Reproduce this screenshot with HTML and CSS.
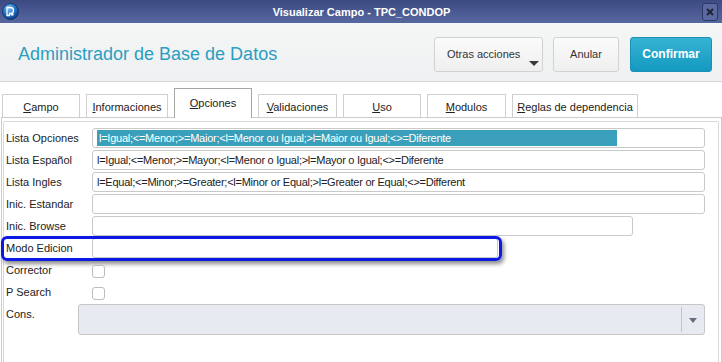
FILE: index.html
```html
<!DOCTYPE html>
<html lang="es">
<head>
    <meta charset="UTF-8">
    <title>Visualizar Campo - TPC_CONDOP</title>
    <link rel="stylesheet" href="styles.css">
</head>
<body>
    <div class="window">
        <div class="titlebar">
            <svg class="app-icon" width="17" height="17" viewBox="0 0 17 17">
                <defs>
                    <radialGradient id="glow" cx="40%" cy="30%" r="70%">
                        <stop offset="0" stop-color="#7fc0f0"/>
                        <stop offset="0.6" stop-color="#1e6cc0"/>
                        <stop offset="1" stop-color="#0c3f86"/>
                    </radialGradient>
                </defs>
                <circle cx="8.5" cy="8.5" r="8" fill="url(#glow)" stroke="#0a2f66" stroke-width="0.8"/>
                <path d="M5 4.5 h3.5 a3 3 0 0 1 0 6 h-1 v2 h-2.5z" fill="none" stroke="#ffffff" stroke-width="1.3"/>
                <rect x="9" y="10.5" width="2.5" height="2" fill="#ffffff"/>
            </svg>
            <span class="title">Visualizar Campo - TPC_CONDOP</span>
            <span class="close">
                <svg width="8" height="8" viewBox="0 0 8 8">
                    <path d="M1 1 L7 7 M7 1 L1 7" stroke="#1e2336" stroke-width="2"/>
                </svg>
            </span>
        </div>

        <div class="header">
            <h1>Administrador de Base de Datos</h1>
            <div class="actions">
                <button class="btn btn-menu">Otras acciones<span class="caret"></span></button>
                <button class="btn btn-cancel">Anular</button>
                <button class="btn btn-primary">Confirmar</button>
            </div>
        </div>

        <div class="tabs">
            <div class="tab w78"><u>C</u>ampo</div>
            <div class="tab w82"><u>I</u>nformaciones</div>
            <div class="tab tab-active w78"><u>O</u>pciones</div>
            <div class="tab w79"><u>V</u>alidaciones</div>
            <div class="tab w78"><u>U</u>so</div>
            <div class="tab w79"><u>M</u>odulos</div>
            <div class="tab w126"><u>R</u>eglas de dependencia</div>
        </div>

        <div class="panel">
            <div class="frame">
                <div class="row">
                    <label>Lista Opciones</label>
                    <div class="field"><span class="selected">l=Igual;&lt;=Menor;&gt;=Maior;&lt;l=Menor ou Igual;&gt;l=Maior ou Igual;&lt;&gt;=Diferente</span></div>
                </div>
                <div class="row">
                    <label>Lista Español</label>
                    <div class="field">l=Igual;&lt;=Menor;&gt;=Mayor;&lt;l=Menor o Igual;&gt;l=Mayor o Igual;&lt;&gt;=Diferente</div>
                </div>
                <div class="row">
                    <label>Lista Ingles</label>
                    <div class="field">l=Equal;&lt;=Minor;&gt;=Greater;&lt;l=Minor or Equal;&gt;l=Greater or Equal;&lt;&gt;=Different</div>
                </div>
                <div class="row">
                    <label>Inic. Estandar</label>
                    <div class="field"></div>
                </div>
                <div class="row">
                    <label>Inic. Browse</label>
                    <div class="field field-browse"></div>
                </div>
                <div class="row">
                    <label>Modo Edicion</label>
                    <div class="field field-mode"></div>
                    <div class="callout"></div>
                </div>
                <div class="row">
                    <label>Corrector</label>
                    <span class="check"></span>
                </div>
                <div class="row">
                    <label>P Search</label>
                    <span class="check"></span>
                </div>
                <div class="row">
                    <label class="label-short">Cons.</label>
                    <div class="combo">
                        <span class="combo-arrow"></span>
                    </div>
                </div>
            </div>
        </div>
    </div>
</body>
</html>
```

FILE: styles.css
```css
body {
    margin: 0;
    font-family: "Liberation Sans", Arial, sans-serif;
    font-size: 11px;
    color: #222;
    background: #ffffff;
}
.window {
    width: 722px;
    height: 362px;
    overflow: hidden;
}
.titlebar {
    height: 23px;
    display: flex;
    align-items: center;
    padding: 0 4px 0 2px;
    background: linear-gradient(#3c4a82, #5767a0);
    box-sizing: border-box;
}
.app-icon {
    flex: none;
}
.title {
    flex: 1;
    text-align: center;
    color: #ffffff;
    font-weight: bold;
    font-size: 11px;
    padding-left: 2px;
}
.close {
    width: 14px;
    height: 16px;
    border: 1px solid #2d3a68;
    border-radius: 3px;
    background: #5a6aa0;
    display: flex;
    align-items: center;
    justify-content: center;
}
.header {
    height: 59px;
    border-bottom: 1px solid #d6d6d6;
    background: linear-gradient(#f5f6f6, #eef0f1);
    display: flex;
    align-items: center;
    justify-content: space-between;
    padding: 4px 10px 0 18px;
    box-sizing: border-box;
}
h1 {
    margin: 0;
    font-weight: normal;
    font-size: 18px;
    color: #2b9ec1;
}
.actions {
    display: flex;
    gap: 10px;
}
.btn {
    height: 35px;
    font-family: "Liberation Sans", Arial, sans-serif;
    font-size: 11px;
    color: #333;
    border: 1px solid #d2d2d2;
    border-radius: 3px;
    background: linear-gradient(#fbfbfb, #efefef);
    padding: 0;
    position: relative;
}
.btn-menu {
    width: 109px;
    text-align: left;
    padding-left: 12px;
}
.caret {
    position: absolute;
    right: 3px;
    bottom: 5px;
    border-left: 5px solid transparent;
    border-right: 5px solid transparent;
    border-top: 5px solid #3a3a3a;
}
.btn-cancel {
    width: 66px;
}
.btn-primary {
    width: 82px;
    margin-left: 1px;
    font-size: 12px;
    font-weight: bold;
    color: #ffffff;
    border-color: #1a90b6;
    background: linear-gradient(#36b3d3, #1499c1);
}
.tabs {
    display: flex;
    align-items: flex-end;
    gap: 6px;
    height: 29px;
    margin-top: 6px;
    padding-left: 2px;
}
.tab {
    height: 23px;
    box-sizing: border-box;
    border: 1px solid #cfcfcf;
    border-bottom: none;
    background: #ffffff;
    text-align: center;
    line-height: 24px;
}
.tab-active {
    height: 30px;
    margin-bottom: -1px;
    border-color: #a6a6a6;
    line-height: 28px;
    position: relative;
}
.w78 { width: 78px; }
.w79 { width: 79px; }
.w82 { width: 82px; }
.w126 { width: 126px; }
.panel {
    border: 1px solid #cccccc;
    border-bottom: none;
    margin-left: 1px;
    padding: 3px 2px 0 1px;
    height: 250px;
}
.frame {
    border: 1px solid #d9d9d9;
    border-bottom: none;
    border-radius: 2px 2px 0 0;
    height: 100%;
    padding: 6px 13px 0 2px;
}
.row {
    display: flex;
    height: 20px;
    margin-bottom: 2px;
    position: relative;
}
.row label {
    width: 86px;
    flex: none;
    line-height: 20px;
}
.row .label-short {
    width: 72px;
}
.field {
    flex: 1;
    height: 20px;
    box-sizing: border-box;
    border: 1px solid #c9c9c9;
    border-radius: 3px;
    padding: 0 4px;
    line-height: 18px;
    letter-spacing: -0.25px;
    white-space: nowrap;
    overflow: hidden;
    background: #ffffff;
}
.selected {
    display: inline-block;
    width: 518px;
    height: 16px;
    line-height: 16px;
    padding-left: 2px;
    margin-top: 1px;
    vertical-align: top;
    background: #3a9fba;
    color: #ffffff;
}
.field-browse {
    flex: none;
    width: 541px;
}
.field-mode {
    flex: none;
    width: 406px;
}
.callout {
    position: absolute;
    left: -5px;
    top: -2px;
    width: 501px;
    height: 25px;
    box-sizing: border-box;
    border: 3px solid #0c18e4;
    border-radius: 6px;
    box-shadow: 2px 3px 4px rgba(0, 0, 0, 0.45);
}
.check {
    width: 13px;
    height: 13px;
    box-sizing: border-box;
    margin-top: 5px;
    border: 1px solid #bdbdbd;
    border-radius: 3px;
    background: #ffffff;
}
.combo {
    flex: 1;
    height: 31px;
    box-sizing: border-box;
    border: 1px solid #c6c6c6;
    border-radius: 3px;
    background: #e8eaf1;
    display: flex;
    justify-content: flex-end;
    padding: 2px 0;
}
.combo-arrow {
    width: 22px;
    border-left: 1px solid #c4c4c4;
    position: relative;
}
.combo-arrow::after {
    content: "";
    position: absolute;
    left: 7px;
    top: 11px;
    border-left: 4px solid transparent;
    border-right: 4px solid transparent;
    border-top: 5px solid #686d7e;
}
```
